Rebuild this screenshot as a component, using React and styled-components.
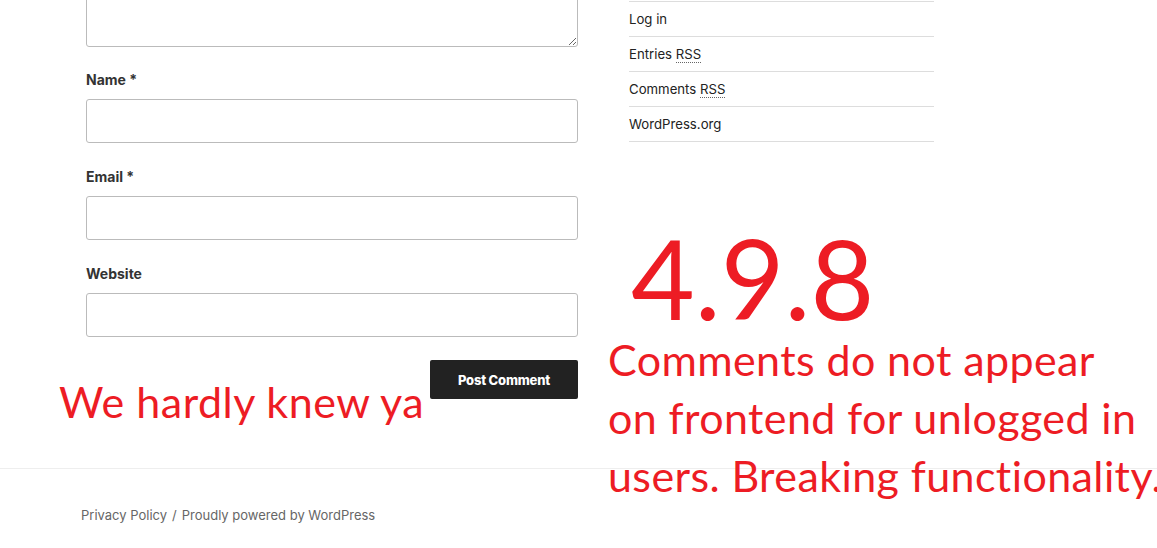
import React from "react";
import styled, { createGlobalStyle } from "styled-components";

const GlobalStyle = createGlobalStyle`
    html, body {
        margin: 0;
        padding: 0;
        background: #fff;
    }
    body {
        font-family: "Inter", "Liberation Sans", sans-serif;
        color: #222;
        overflow: hidden;
    }
`;

const Page = styled.div`
    position: relative;
    width: 1157px;
    height: 548px;
    overflow: hidden;
`;

const Main = styled.div`
    display: flex;
    gap: 51px;
    padding-left: 86px;
`;

const CommentForm = styled.form`
    width: 492px;
    display: flex;
    flex-direction: column;
`;

const TextArea = styled.textarea`
    box-sizing: border-box;
    display: block;
    width: 100%;
    height: 147px;
    margin-top: -100px;
    border: 1px solid #bbb;
    border-radius: 3px;
    resize: vertical;
`;

const Field = styled.div`
    margin-top: ${(props) => props.$gap || 23}px;
`;

const Label = styled.label`
    display: block;
    font-size: 14px;
    font-weight: 700;
    line-height: 21px;
    color: #333;
    margin-bottom: 9px;
`;

const Input = styled.input`
    box-sizing: border-box;
    display: block;
    width: 100%;
    height: 44px;
    border: 1px solid #bbb;
    border-radius: 3px;
    background: #fff;
`;

const Submit = styled.div`
    display: flex;
    justify-content: flex-end;
    margin-top: 23px;
`;

const Button = styled.button`
    width: 148px;
    height: 39px;
    border: none;
    border-radius: 2px;
    background: #222;
    color: #fff;
    font-family: inherit;
    font-size: 13px;
    font-weight: 800;
    letter-spacing: -0.2px;
`;

const Sidebar = styled.ul`
    list-style: none;
    margin: 1px 0 0;
    padding: 0;
    width: 305px;
`;

const SideItem = styled.li`
    border-top: 1px solid #ddd;
    padding: 7px 0 6px;
    font-size: 13.2px;
    line-height: 21px;
    color: #222;

    &:last-child {
        border-bottom: 1px solid #ddd;
    }
`;

const Abbr = styled.abbr`
    text-decoration: none;
    border-bottom: 1px dotted #666;
`;

const Footer = styled.footer`
    margin-top: 69px;
    border-top: 1px solid #eee;
    padding: 36px 0 0 81px;
    font-size: 13px;
    line-height: 21px;
    color: #666;
`;

const Sep = styled.span`
    margin: 0 5px;
`;

/* paint-style notes drawn over the screenshot */
const Note = styled.div`
    position: absolute;
    left: ${(props) => props.$x}px;
    top: ${(props) => props.$y}px;
    font-family: "Lato", "Open Sans", sans-serif;
    color: #ed1c24;
    font-size: ${(props) => props.$size}px;
    line-height: ${(props) => props.$lh}px;
    letter-spacing: ${(props) => props.$track || 0}px;
    white-space: nowrap;
`;

const App = () => (
    <>
        <GlobalStyle />
        <Page>
            <Main>
                <CommentForm>
                    <TextArea />
                    <Field $gap={22}>
                        <Label>Name *</Label>
                        <Input />
                    </Field>
                    <Field>
                        <Label>Email *</Label>
                        <Input />
                    </Field>
                    <Field>
                        <Label>Website</Label>
                        <Input />
                    </Field>
                    <Submit>
                        <Button type="button">Post Comment</Button>
                    </Submit>
                </CommentForm>
                <Sidebar>
                    <SideItem>Log in</SideItem>
                    <SideItem>Entries <Abbr>RSS</Abbr></SideItem>
                    <SideItem>Comments <Abbr>RSS</Abbr></SideItem>
                    <SideItem>WordPress.org</SideItem>
                </Sidebar>
            </Main>
            <Footer>
                Privacy Policy<Sep>/</Sep>Proudly powered by WordPress
            </Footer>

            <Note $x={59} $y={372} $size={43} $lh={60} $track={0.5}>We hardly knew ya</Note>
            <Note $x={631} $y={217} $size={110} $lh={120}>4.9.8</Note>
            <Note $x={608} $y={331} $size={43} $lh={58} $track={0.4}>
                Comments do not appear<br />
                on frontend for unlogged in<br />
                users. Breaking functionality.
            </Note>
        </Page>
    </>
);

export default App;
